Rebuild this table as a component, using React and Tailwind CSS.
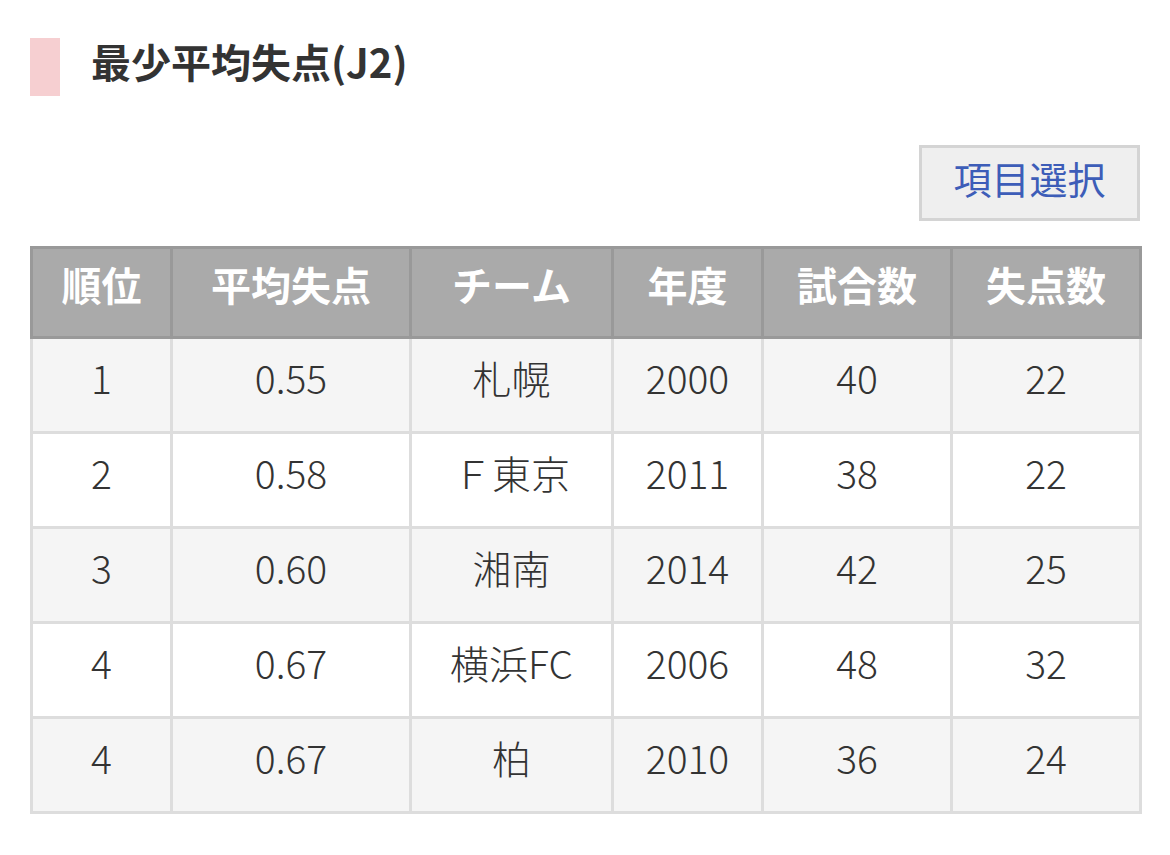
import React from 'react'

const rows = [
  ['1', '0.55', '札幌', '2000', '40', '22'],
  ['2', '0.58', 'Ｆ東京', '2011', '38', '22'],
  ['3', '0.60', '湘南', '2014', '42', '25'],
  ['4', '0.67', '横浜FC', '2006', '48', '32'],
  ['4', '0.67', '柏', '2010', '36', '24'],
]

const headers = ['順位', '平均失点', 'チーム', '年度', '試合数', '失点数']
const widths = ['w-[140px]', 'w-[239px]', 'w-[202px]', 'w-[150px]', 'w-[189px]', 'w-[189px]']

export default function App() {
  return (
    <div className="w-[1170px] h-[855px] bg-white px-[30px] pt-[38px] text-[#333]" style={{ fontFamily: '"Noto Sans CJK JP", "Noto Sans", sans-serif' }}>
      <div className="flex items-center h-[58px]">
        <div className="w-[30px] h-[58px] bg-[#f6cfd1]" />
        <h1 className="ml-[31px] pb-[12px] text-[40px] font-bold leading-none">最少平均失点(J2)</h1>
      </div>

      <div className="flex justify-end mt-[49px]">
        <button className="w-[221px] h-[76px] border-[3px] border-[#d4d4d4] bg-[#efefef] text-[#3d5db8] text-[38px] leading-none pb-[10px]">
          項目選択
        </button>
      </div>

      <table className="mt-[25px] w-[1109px] table-fixed border-collapse">
        <colgroup>
          {widths.map((w, i) => <col key={i} className={w} />)}
        </colgroup>
        <thead>
          <tr className="h-[90px] bg-[#aaaaaa]">
            {headers.map((h) => (
              <th key={h} className="border-[3px] border-[#999999] pb-[17px] text-white text-[40px] font-bold leading-none">{h}</th>
            ))}
          </tr>
        </thead>
        <tbody>
          {rows.map((r, i) => (
            <tr key={i} className={i % 2 === 0 ? 'h-[95px] bg-[#f5f5f5]' : 'h-[95px] bg-white'}>
              {r.map((c, j) => (
                <td key={j} className="border-[3px] border-[#dddddd] pb-[15px] text-center text-[39px] font-light leading-none">{c}</td>
              ))}
            </tr>
          ))}
        </tbody>
      </table>
    </div>
  )
}
